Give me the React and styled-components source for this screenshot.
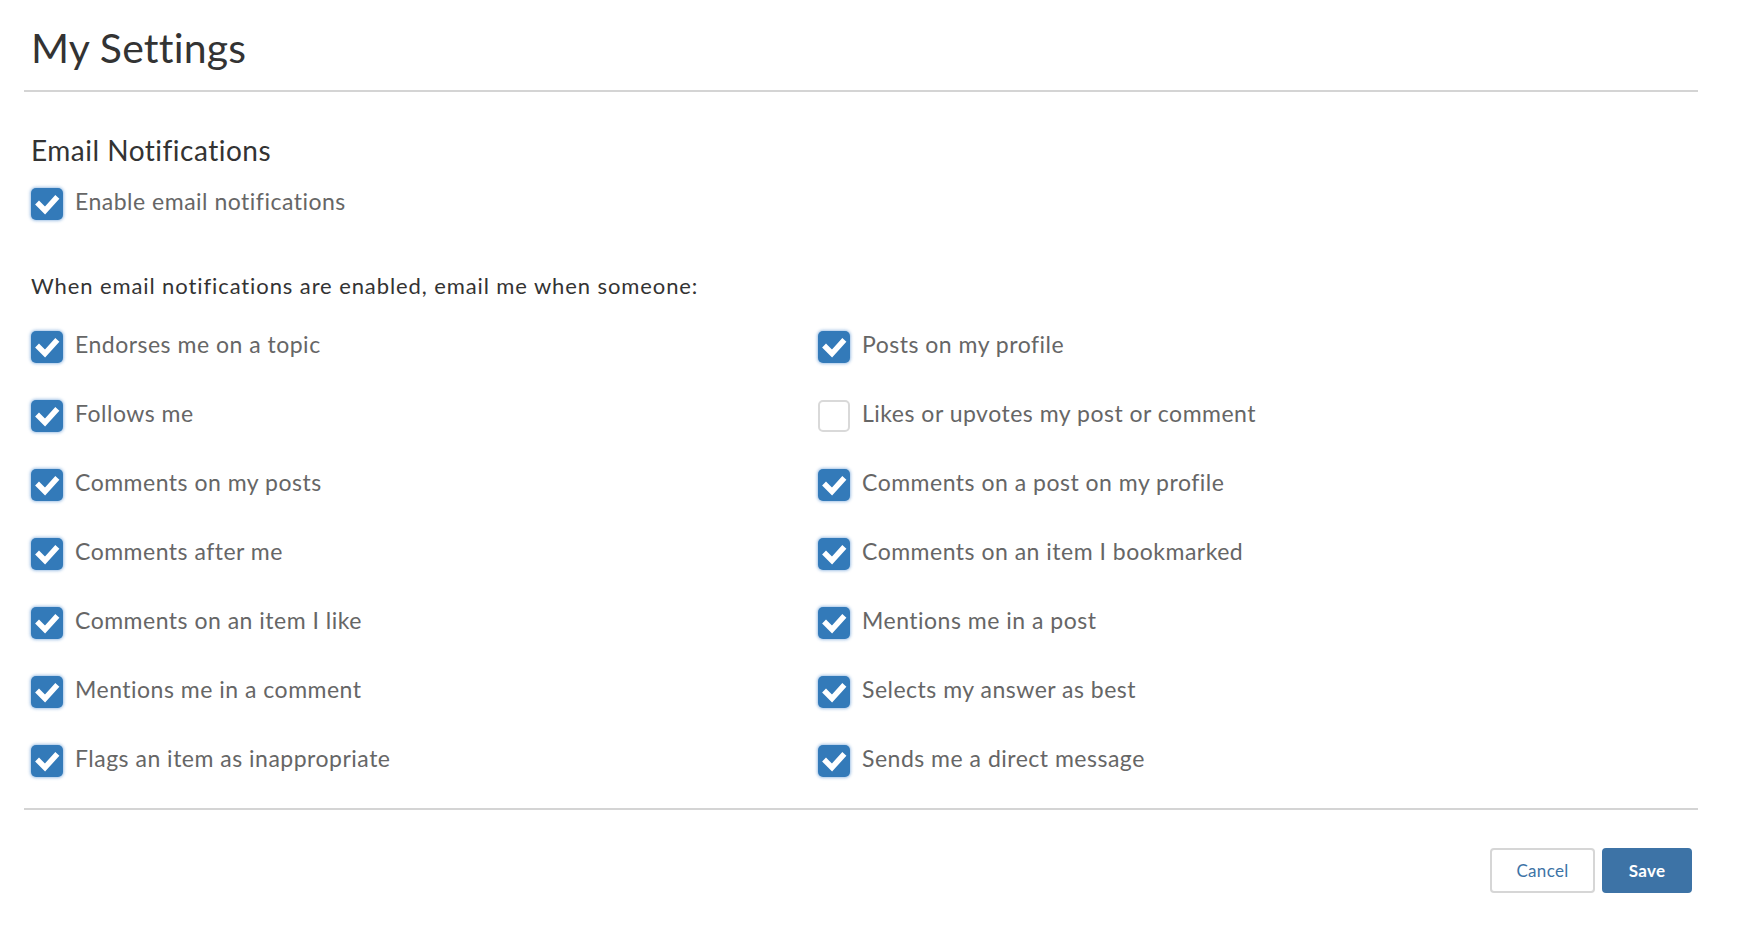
import React, { useState } from "react";
import styled, { createGlobalStyle } from "styled-components";

const GlobalStyle = createGlobalStyle`
  body {
    margin: 0;
    background: #fff;
    font-family: Lato, "Open Sans", "Liberation Sans", sans-serif;
  }
`;

const Page = styled.div`
  padding: 0 42px 0 24px;
`;

const Header = styled.header`
  padding: 27px 0 22px 7px;
  border-bottom: 2px solid #d4d4d4;
`;

const Title = styled.h1`
  margin: 0;
  font-size: 41px;
  line-height: 1;
  font-weight: 400;
  letter-spacing: 0.2px;
  color: #333;
`;

const Section = styled.section`
  padding: 44px 0 31px 7px;
  border-bottom: 2px solid #d4d4d4;
`;

const SectionTitle = styled.h2`
  margin: 0 0 24px;
  font-size: 28px;
  line-height: 1;
  font-weight: 400;
  letter-spacing: 0.5px;
  color: #333;
`;

const Intro = styled.p`
  margin: 55px 0 34px;
  font-size: 22px;
  line-height: 1;
  letter-spacing: 0.9px;
  color: #333;
`;

const Grid = styled.div`
  display: grid;
  grid-template-columns: 787px 1fr;
  row-gap: 37px;
`;

const Row = styled.label`
  display: flex;
  align-items: flex-start;
  gap: 12px;
  cursor: pointer;
`;

const Box = styled.span`
  flex: none;
  width: 32px;
  height: 32px;
  box-sizing: border-box;
  border-radius: 5px;
  display: flex;
  align-items: center;
  justify-content: center;
  background: ${(p) => (p.$checked ? "#337ab9" : "#fff")};
  border: ${(p) => (p.$checked ? "none" : "2px solid #d9d9d9")};
  box-shadow: ${(p) => (p.$checked ? "0 0 3px 1px rgba(51, 122, 200, 0.45)" : "none")};
`;

const Label = styled.span`
  margin-top: 2px;
  font-size: 23px;
  line-height: 1;
  letter-spacing: 0.5px;
  color: #666;
`;

const Footer = styled.footer`
  display: flex;
  justify-content: flex-end;
  gap: 7px;
  padding: 38px 6px 0 0;
`;

const Button = styled.button`
  height: 45px;
  min-width: ${(p) => (p.$primary ? "90px" : "105px")};
  box-sizing: border-box;
  border-radius: 4px;
  font-family: inherit;
  font-size: 17px;
  letter-spacing: 0.3px;
  font-weight: ${(p) => (p.$primary ? 700 : 400)};
  cursor: pointer;
  background: ${(p) => (p.$primary ? "#3d73a6" : "#fff")};
  color: ${(p) => (p.$primary ? "#fff" : "#3d73a6")};
  border: 2px solid ${(p) => (p.$primary ? "#3d73a6" : "#d6d6d6")};
`;

function Checkbox({ checked }) {
  return (
    <Box $checked={checked}>
      {checked && (
        <svg width="32" height="32" viewBox="0 0 32 32">
          <polyline
            points="8,16.5 14,22.5 24.5,11"
            fill="none"
            stroke="#fff"
            strokeWidth="5.5"
            strokeLinecap="square"
          />
        </svg>
      )}
    </Box>
  );
}

const options = [
  { id: "endorse", text: "Endorses me on a topic", on: true },
  { id: "posts", text: "Posts on my profile", on: true },
  { id: "follow", text: "Follows me", on: true },
  { id: "likes", text: "Likes or upvotes my post or comment", on: false },
  { id: "comments", text: "Comments on my posts", on: true },
  { id: "profileComments", text: "Comments on a post on my profile", on: true },
  { id: "after", text: "Comments after me", on: true },
  { id: "bookmarked", text: "Comments on an item I bookmarked", on: true },
  { id: "liked", text: "Comments on an item I like", on: true },
  { id: "mentionPost", text: "Mentions me in a post", on: true },
  { id: "mentionComment", text: "Mentions me in a comment", on: true },
  { id: "best", text: "Selects my answer as best", on: true },
  { id: "flags", text: "Flags an item as inappropriate", on: true },
  { id: "dm", text: "Sends me a direct message", on: true },
];

export default function App() {
  const [enabled, setEnabled] = useState(true);
  const [prefs, setPrefs] = useState(
    Object.fromEntries(options.map((o) => [o.id, o.on]))
  );

  const toggle = (id) => setPrefs((p) => ({ ...p, [id]: !p[id] }));

  return (
    <Page>
      <GlobalStyle />
      <Header>
        <Title>My Settings</Title>
      </Header>
      <Section>
        <SectionTitle>Email Notifications</SectionTitle>
        <Row onClick={() => setEnabled(!enabled)}>
          <Checkbox checked={enabled} />
          <Label>Enable email notifications</Label>
        </Row>
        <Intro>When email notifications are enabled, email me when someone:</Intro>
        <Grid>
          {options.map((o) => (
            <Row key={o.id} onClick={() => toggle(o.id)}>
              <Checkbox checked={prefs[o.id]} />
              <Label>{o.text}</Label>
            </Row>
          ))}
        </Grid>
      </Section>
      <Footer>
        <Button>Cancel</Button>
        <Button $primary>Save</Button>
      </Footer>
    </Page>
  );
}
